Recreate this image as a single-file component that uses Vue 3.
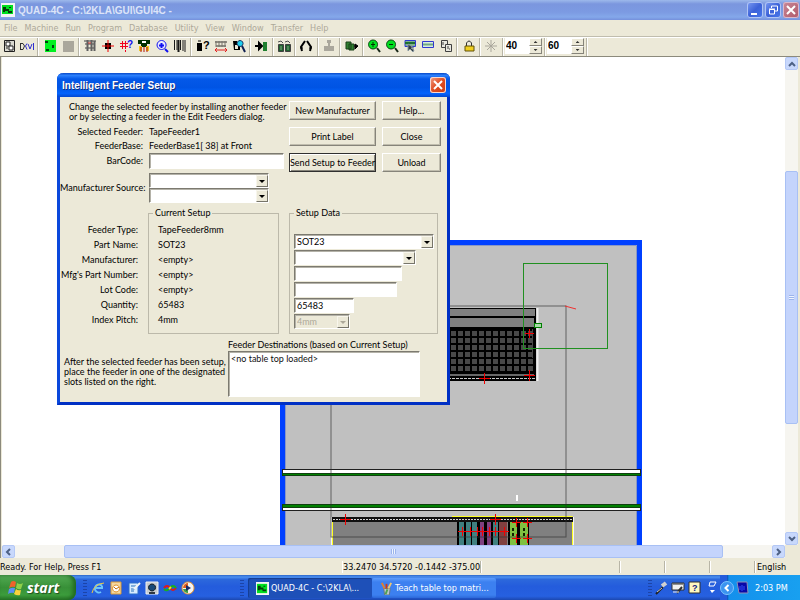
<template>
  <div class="desktop">
    <!-- main window title -->
    <header class="titlebar">
      <svg class="app-icon" width="14" height="14" viewBox="0 0 14 14">
        <path d="M0 0H14V14H0Z" fill="#f4f4f4" />
        <path d="M1 2H12V11H1Z" fill="#00e020" />
        <path d="M2 4H5V6H8V8H11V10H7V8H4V9H2ZM8 4H10V5H8Z" fill="#063c0a" />
      </svg>
      <h1>QUAD-4C - C:\2KLA\GUI\GUI4C -</h1>
      <div class="caption-buttons">
        <button class="caption" aria-label="Minimize">
          <svg width="16" height="16" viewBox="0 0 16 16"><path d="M4 11H10V13H4Z" fill="#fff" /></svg>
        </button>
        <button class="caption" aria-label="Restore">
          <svg width="16" height="16" viewBox="0 0 16 16" fill="none" stroke="#fff">
            <path d="M6.500 6V4H12.500V9H10" /><path d="M4.500 7.500H9.500V12H4.500ZM4 7H10" />
          </svg>
        </button>
        <button class="caption close-dim" aria-label="Close window">
          <svg width="16" height="16" viewBox="0 0 16 16"><path d="M4 4L12 12M12 4L4 12" stroke="#fff" stroke-width="2" /></svg>
        </button>
      </div>
    </header>

    <nav class="menubar">
      <button v-for="item in menu" :key="item">{{ item }}</button>
    </nav>

    <!-- toolbar -->
    <div class="toolbar">
      <div class="tools">
        <template v-for="(group, g) in tools" :key="g">
          <button v-for="tool in group" :key="tool.name" class="tool" :aria-label="tool.name">
            <svg width="16" height="16" viewBox="0 0 16 16">
              <path
                v-for="(p, i) in tool.paths"
                :key="i"
                :d="p[0]"
                :fill="p[1] || 'none'"
                :stroke="p[2] || 'none'"
                :stroke-width="p[3] || 1"
              />
              <text
                v-if="tool.mark"
                class="tool-mark"
                :x="tool.mark[1]"
                :y="tool.mark[2]"
                :fill="tool.mark[3]"
                :font-size="tool.mark[4]"
              >{{ tool.mark[0] }}</text>
            </svg>
          </button>
          <span class="separator"></span>
        </template>
      </div>
      <div v-for="s in speeds" :key="s.label" class="spinner">
        <input v-model="s.value" type="text" :aria-label="s.label" />
        <div class="spin-buttons">
          <button :aria-label="s.label + ' up'" @click="s.value++"><i class="tri up"></i></button>
          <button :aria-label="s.label + ' down'" @click="s.value--"><i class="tri down"></i></button>
        </div>
        <span class="separator"></span>
      </div>
    </div>

    <!-- machine view -->
    <main class="workarea">
      <div class="view">
        <svg class="machine" width="100%" height="100%">
          <g transform="translate(-2 -57)">
            <rect x="282.500" y="242.500" width="357" height="400" fill="#c0c0c0" stroke="#0040ff" stroke-width="5" />
            <path d="M285.500 560V245.500H636.500V560" fill="none" stroke="#8a98c4" />
            <!-- rear feeder bank -->
            <rect x="400" y="308" width="136" height="73" fill="#000" />
            <path d="M400 312.500H535" stroke="#808080" stroke-width="7" />
            <path d="M400 322.500H534" stroke="#808080" stroke-width="9" />
            <path d="M400 375H534" stroke="#686868" stroke-width="2" />
            <path d="M400 378.500H535" stroke="#c8c8c8" stroke-dasharray="3 1" />
            <path d="M537.500 308V381" stroke="#eee" stroke-width="2" />
            <template v-for="r in 6" :key="r">
              <rect v-for="c in 12" :key="c" :x="444 + c * 7" :y="324 + r * 7" width="5" height="5" fill="#484848" />
            </template>
            <path d="M532.500 329V358" stroke="#484848" />
            <!-- conveyor rails -->
            <rect x="282.500" y="469.500" width="358" height="6" fill="#fff" stroke="#202020" />
            <rect x="282.500" y="473.500" width="358" height="2" fill="#008000" stroke="#104010" />
            <rect x="282.500" y="504.500" width="358" height="6" fill="#fff" stroke="#202020" />
            <rect x="282.500" y="504.500" width="358" height="3" fill="#008000" stroke="#104010" />
            <rect x="516" y="495" width="2" height="6" fill="#fff" />
            <!-- front feeder bank -->
            <rect x="332" y="517" width="241" height="40" fill="#808080" />
            <path d="M331.500 517V557M573.500 517V557" stroke="#f4f4f4" />
            <path d="M332.500 521V557M452 516.500H572.500V557" fill="none" stroke="#ffff20" />
            <rect x="332" y="517" width="241" height="5" fill="#101010" />
            <path d="M333 519.500H572" stroke="#d8d8d8" stroke-dasharray="2 1" />
            <rect x="457" y="522" width="50" height="40" fill="#000" />
            <rect x="508" y="522" width="21" height="40" fill="#000" />
            <rect v-for="f in feeders" :key="f.x" :x="f.x" y="522" :width="f.w" height="40" :fill="f.color" />
            <path d="M512 528h2v3h-2zM512 533h2v3h-2zM523 528h2v3h-2zM523 533h2v3h-2z" fill="#102000" />
            <!-- work envelope -->
            <rect x="331" y="306" width="235" height="231" fill="none" stroke="#303030" stroke-opacity="0.650" />
            <rect x="523.500" y="263.500" width="84" height="85" fill="none" stroke="#209020" />
            <rect x="534.500" y="323.500" width="7" height="4" fill="#a8d8a8" stroke="#008000" />
            <path d="M565 306L576 309" stroke="#f03030" stroke-width="1" />
            <path v-for="(c, i) in crosses" :key="i" :d="crossPath(c)" stroke="#f00000" />
          </g>
        </svg>
        <div class="scrollbar vertical">
          <button aria-label="Scroll up"><svg width="8" height="8" viewBox="0 0 8 8"><path d="M1 6L4 3L7 6" /></svg></button>
          <span class="gap-before"></span>
          <span class="thumb"><i></i></span>
          <span class="gap-after"></span>
          <button aria-label="Scroll down"><svg width="8" height="8" viewBox="0 0 8 8"><path d="M1 2L4 5L7 2" /></svg></button>
        </div>
      </div>
      <div class="scrollbar horizontal">
        <button aria-label="Scroll left"><svg width="8" height="8" viewBox="0 0 8 8"><path d="M5 1L2 4L5 7" /></svg></button>
        <span class="gap-before"></span>
        <span class="thumb"><i></i></span>
        <span class="gap-after"></span>
        <button aria-label="Scroll right"><svg width="8" height="8" viewBox="0 0 8 8"><path d="M3 1L6 4L3 7" /></svg></button>
      </div>
    </main>

    <footer class="statusbar">
      <span class="pane ready">Ready. For Help, Press F1</span>
      <span class="pane wide">33.2470 34.5720 -0.1442 -375.00</span>
      <span class="pane wide"></span>
      <span class="pane"></span>
      <span class="pane"></span>
      <span class="pane"></span>
      <span class="pane">English</span>
    </footer>

    <!-- taskbar -->
    <div class="taskbar">
      <button class="start">
        <svg width="16" height="16" viewBox="0 0 16 16">
          <path d="M3 2Q5 0 8 2L7 7Q4 6 1 8Z" fill="#f0622c" />
          <path d="M9 3Q12 5 15 3L13 9Q11 10 8 8Z" fill="#8fd04a" />
          <path d="M1 9Q4 7 7 8L6 13Q3 12 0 14Z" fill="#5a90f4" />
          <path d="M8 9Q10 11 13 10L12 15Q9 16 6 14Z" fill="#fbd33c" />
        </svg>
        <span>start</span>
      </button>
      <div class="quick">
        <i class="grip"></i>
        <button v-for="q in quickLaunch" :key="q.name" :aria-label="q.name">
          <svg width="14" height="14" viewBox="0 0 14 14">
            <path
              v-for="(p, i) in q.paths"
              :key="i"
              :d="p[0]"
              :fill="p[1] || 'none'"
              :stroke="p[2] || 'none'"
              :stroke-width="p[3] || 1"
            />
          </svg>
        </button>
      </div>
      <i class="grip"></i>
      <div class="tasks">
        <button class="task active">
          <svg width="13" height="13" viewBox="0 0 14 14">
            <path d="M0 0H14V14H0Z" fill="#f4f4f4" />
            <path d="M1 2H12V12H1Z" fill="#00e020" />
            <path d="M2 4H5V6H8V8H11V10H7V8H4V9H2ZM8 4H10V5H8Z" fill="#063c0a" />
          </svg>
          <span>QUAD-4C - C:\2KLA\...</span>
        </button>
        <button class="task">
          <svg width="13" height="13" viewBox="0 0 14 14">
            <path d="M4 7H11L10 14H5Z" fill="#b8c4c8" stroke="#66767c" />
            <path d="M5 7L2 1" stroke="#e08030" stroke-width="2" />
            <path d="M7 7L7 2" stroke="#d03818" stroke-width="2" />
            <path d="M9 7L12 1" stroke="#f0c870" stroke-width="2" />
            <path d="M8 8L6 13" stroke="#50a050" stroke-width="2" />
          </svg>
          <span>Teach table top matri...</span>
        </button>
      </div>
      <div class="langbar">
        <i class="grip"></i>
        <button v-for="t in trayTools" :key="t.name" :aria-label="t.name">
          <svg width="14" height="14" viewBox="0 0 14 14">
            <path
              v-for="(p, i) in t.paths"
              :key="i"
              :d="p[0]"
              :fill="p[1] || 'none'"
              :stroke="p[2] || 'none'"
              :stroke-width="p[3] || 1"
            />
            <text v-if="t.mark" class="tool-mark" x="4" y="10" fill="#102080" font-size="9">?</text>
          </svg>
        </button>
      </div>
      <div class="tray">
        <button class="chevron" aria-label="Show hidden icons">
          <svg width="14" height="14" viewBox="0 0 14 14">
            <circle cx="7" cy="7" r="6.500" fill="#3a94f0" stroke="#7cc4fc" />
            <path d="M8.500 4L5.500 7L8.500 10" fill="none" stroke="#fff" stroke-width="2" />
          </svg>
        </button>
        <svg class="tray-icon" width="14" height="14" viewBox="0 0 14 14">
          <path d="M2 1H12L13 12H4Z" fill="#0808a8" stroke="#9090b8" />
          <path d="M5 5V9M7 4V10M9 5V9" stroke="#3050ff" />
        </svg>
        <time>2:03 PM</time>
      </div>
    </div>

    <!-- feeder dialog -->
    <section class="dialog" role="dialog" aria-labelledby="dlg-title">
      <div class="dialog-title">
        <h2 id="dlg-title">Intelligent Feeder Setup</h2>
        <button aria-label="Close dialog">
          <svg width="16" height="16" viewBox="0 0 16 16"><path d="M4 4L12 12M12 4L4 12" stroke="#fff" stroke-width="2" /></svg>
        </button>
      </div>
      <div class="dialog-body">
        <div class="top">
          <div class="feeder-info">
            <p class="intro">Change the selected feeder by installing another feeder<br />or by selecting a feeder in the Edit Feeders dialog.</p>
            <div class="row"><span>Selected Feeder:</span><span>TapeFeeder1</span></div>
            <div class="row"><span>FeederBase:</span><span>FeederBase1[ 38] at Front</span></div>
            <div class="row tall">
              <label for="barcode">BarCode:</label>
              <input id="barcode" v-model="barCode" type="text" />
            </div>
            <div class="row source">
              <label for="source">Manufacturer Source:</label>
              <div>
                <span class="combo w-source"><select id="source"><option></option></select></span>
                <span class="combo w-source"><select aria-label="Manufacturer Source detail"><option></option></select></span>
              </div>
            </div>
          </div>
          <div class="actions">
            <button
              v-for="a in actions"
              :key="a"
              :class="{ default: a === 'Send Setup to Feeder' }"
            >{{ a }}</button>
          </div>
        </div>

        <div class="setup">
          <div class="labels">
            <template v-for="f in fields" :key="f.label">
              <label v-if="f.id" :for="f.id">{{ f.label }}:</label>
              <span v-else>{{ f.label }}:</span>
            </template>
          </div>
          <fieldset class="current">
            <legend>Current Setup</legend>
            <p v-for="f in fields" :key="f.label">{{ f.current }}</p>
          </fieldset>
          <fieldset class="data">
            <legend>Setup Data</legend>
            <span class="combo w-part"><select id="part"><option>SOT23</option></select></span>
            <span class="combo w-maker"><select id="maker"><option></option></select></span>
            <input id="mfg" v-model="mfgPart" class="w-mfg" type="text" />
            <input id="lot" v-model="lotCode" class="w-lot" type="text" />
            <input id="qty" v-model="quantity" class="w-qty" type="text" />
            <span class="combo w-pitch disabled"><select id="pitch" disabled><option>4mm</option></select></span>
          </fieldset>
        </div>

        <div class="bottom">
          <p>After the selected feeder has been setup,<br />place the feeder in one of the designated<br />slots listed on the right.</p>
          <div class="destinations">
            <label for="dest">Feeder Destinations (based on Current Setup)</label>
            <select id="dest" size="4"><option>&lt;no table top loaded&gt;</option></select>
          </div>
        </div>
      </div>
    </section>
  </div>
</template>

<script setup>
import { ref } from "vue";

const menu = ["File", "Machine", "Run", "Program", "Database", "Utility", "View", "Window", "Transfer", "Help"];

const speeds = ref([
  { label: "Speed", value: 40 },
  { label: "Step", value: 60 },
]);

const barCode = ref("");
const mfgPart = ref("");
const lotCode = ref("");
const quantity = ref("65483");

const actions = ["New Manufacturer", "Help...", "Print Label", "Close", "Send Setup to Feeder", "Unload"];

const fields = [
  { label: "Feeder Type", current: "TapeFeeder8mm" },
  { label: "Part Name", current: "SOT23", id: "part" },
  { label: "Manufacturer", current: "<empty>", id: "maker" },
  { label: "Mfg's Part Number", current: "<empty>", id: "mfg" },
  { label: "Lot Code", current: "<empty>", id: "lot" },
  { label: "Quantity", current: "65483", id: "qty" },
  { label: "Index Pitch", current: "4mm", id: "pitch" },
];

const feeders = [
  { x: 459, w: 5, color: "#408080" },
  { x: 466, w: 5, color: "#408080" },
  { x: 472, w: 5, color: "#408080" },
  { x: 480, w: 4, color: "#804080" },
  { x: 487, w: 4, color: "#804080" },
  { x: 493, w: 5, color: "#408080" },
  { x: 499, w: 8, color: "#804040" },
  { x: 510, w: 7, color: "#80c040" },
  { x: 520, w: 8, color: "#80c040" },
];

// x, y, half size
const crosses = [
  [529, 333, 4], [529, 375, 5], [484, 378, 5], [345, 519, 5], [495, 519, 5],
  [462, 531, 4], [470, 531, 4], [477, 531, 4], [482, 531, 4], [489, 531, 4],
  [495, 531, 4], [504, 531, 4], [516, 522, 4], [527, 522, 4], [516, 538, 4], [527, 538, 4],
];
const crossPath = ([x, y, r]) => `M${x - r} ${y + 0.5}H${x + r + 1}M${x + 0.5} ${y - r}V${y + r + 1}`;

// every path is [d, fill, stroke, stroke width]
const tools = [
  [
    { name: "Open", paths: [["M3.500 2.500H13.500V13.500H3.500Z", "#d8d8d0", "#202020"], ["M5 4H9V8H5Z", "#fff", "#202020"], ["M8 8H12V12H8Z", "#fff", "#202020"], ["M5 10H7", "", "#202020"]] },
    { name: "Codes", paths: [["M1.500 5V12M2 5.500H4L5.500 8L4 11.500H2", "", "#303030"], ["M8 5.500L6.500 8L8 11.500M9 6L11 11L13 6M14.500 5V12", "", "#3030d0"]] },
  ],
  [
    { name: "Board", paths: [["M3 2H14V14H3Z", "#00f020"], ["M3 3H6V5H3ZM10 7H12V10H10ZM4 11H7V13H4Z", "#004010"]] },
    { name: "Blank", paths: [["M3 3H14V14H3Z", "#aaa79c"]] },
  ],
  [
    { name: "Feeders", paths: [["M2 3H14M3 6H13M3 10H13", "", "#404040"], ["M5.500 2V13M9.500 2V13M12.500 3V13", "", "#606060", 2], ["M6 5H9", "", "#d03030"]] },
    { name: "Target", paths: [["M5 5H11V11H5Z", "#000"], ["M8 2V14M2 8H14", "", "#f00000", 1]] },
    { name: "Locate", paths: [["M4.500 3V11M7.500 3V11M2 5.500H10M2 8.500H10M7.500 12V14", "", "#f00020"]], mark: ["?", 9, 10, "#1010f0", 10] },
    { name: "Head", paths: [["M2 2H14V6H11V9H5V6H2Z", "#003000"], ["M6 3H10V5H6Z", "#fff"], ["M3 8H6V13H3ZM10 8H13V13H10Z", "#f0c820"], ["M5 9V14M8 9V14M11 9V14", "", "#b01010"]] },
    { name: "Find", paths: [["M7.500 2.500A4.500 4.500 0 1 0 7.600 2.500", "#e8e8ff", "#1010f0", 1], ["M5 7.500H10M7.500 5V10", "", "#1010f0", 2], ["M11 11L14 14", "", "#1010f0", 2]] },
    { name: "Barcode", paths: [["M2.500 2V12M5 2V12M8.500 2V12M13 2V14M11 2V13", "", "#181818"], ["M6.500 2V14", "", "#181818", 2]] },
  ],
  [
    { name: "What", paths: [["M2 5H7V13H2Z", "#000"], ["M3 3H6", "", "#000"]], mark: ["?", 8, 11, "#000", 11] },
    { name: "Width", paths: [["M2 4H14M3 8H13", "", "#908c82", 2], ["M3 3V9M6 3V9M9 3V9M12 3V9", "", "#77746c"], ["M2 12H14M4 10L2 12L4 14M12 10L14 12L12 14", "", "#e02020"]] },
    { name: "Inspect", paths: [["M2 3H6V7H4V11H7V8H9V12H3Z", "#000"], ["M9 2.500A3 3 0 1 0 9.100 2.500", "#20d0f0", "#103060"], ["M11 8L14 14", "", "#102050", 2]] },
  ],
  [{ name: "Insert", paths: [["M2 8H8M6 5L9 8L6 11Z", "#000", "#000", 2], ["M10 4H14V13H10Z", "#208030"]] }],
  [{ name: "Pair", paths: [["M2.500 6.500H7.500V13.500H2.500ZM9.500 6.500H14.500V13.500H9.500Z", "#206030", "#404040"], ["M5 8V12M12 8V12", "", "#80b080"], ["M2 4L5 3L7 5M9 4L12 3L14 5", "", "#505050"]] }],
  [{ name: "Tools", paths: [["M7 3L3 9L4 13M9 3L13 9L12 13", "", "#000", 2], ["M2 10H5M11 10H14", "", "#000"]] }],
  [{ name: "Stamp", paths: [["M6 2H10V5H9V8H13V13H3V8H7V5H6Z", "#aaa79c"]] }],
  [{ name: "Run", paths: [["M2 4H7V11H2ZM5 6H10V12H5Z", "#308030", "#184018"], ["M10 8H12M11 6L14 8L11 11Z", "#000", "#000"]] }],
  [
    { name: "Zoom in", paths: [["M7 2A4.500 4.500 0 1 0 7.100 2", "#00e020", "#084010"], ["M5 6.500H9M7 4V9", "", "#003000"], ["M11 10L14 14", "", "#182818", 2]] },
    { name: "Zoom out", paths: [["M7 2A4.500 4.500 0 1 0 7.100 2", "#00e020", "#084010"], ["M5 6.500H9", "", "#003000"], ["M11 10L14 14", "", "#182818", 2]] },
    { name: "Select view", paths: [["M3 2.500H13.500V8.500H3Z", "#80b090", "#3038d0"], ["M3 5H13", "", "#207030", 2], ["M6 6V13L8 11L11 14L12 12L9 10H12Z", "#303840", "#8898a0"]] },
    { name: "Full view", paths: [["M2.500 3.500H13.500V9.500H2.500Z", "#d8ece0", "#3038d0"], ["M3 6.500H13", "", "#70a880", 2]] },
    { name: "Copy", paths: [["M3.500 2.500H9.500V9.500H3.500Z", "#e8e8e0", "#404040"], ["M7.500 6.500H13.500V13.500H7.500Z", "#e8e8e0", "#404040"], ["M5 4V7M10 8V11M11 11H12", "", "#404040"]] },
  ],
  [{ name: "Lock", paths: [["M5.500 8V5Q8 1 10.500 5V8", "", "#303030", 1], ["M4 8H13V13H4Z", "#f0d020", "#605008"]] }],
  [{ name: "Burst", paths: [["M8 2V14M2 8H14M4 4L12 12M12 4L4 12", "", "#aaa79c"]] }],
];

const quickLaunch = [
  { name: "Internet Explorer", paths: [["M11 5A4 4 0 1 0 10 11M4 7H11V5", "", "#6cc4fc", 2], ["M1 12Q3 3 13 2", "", "#f0c840"]] },
  { name: "Outlook", paths: [["M2 1H12V13H2Z", "#f4d8a0", "#d89838"], ["M7 4A3.500 3.500 0 1 0 7.100 4", "#fff", "#e08c20"], ["M5 6L7 8L10 6", "", "#c07010"]] },
  { name: "Show desktop", paths: [["M2 2H11V13H2Z", "#d8ecff", "#3070c8"], ["M4 5H9M4 8H8M4 10H7", "", "#2c70b8"], ["M7 8L13 2", "", "#f4f4f4", 2]] },
  { name: "Camera", paths: [["M1 1H13V13H1Z", "#c8ccd0", "#f0f0f0"], ["M7 3A3.500 3.500 0 1 0 7.100 3", "#184878", "#101820"], ["M4 12H10", "", "#303840", 2]] },
  { name: "Links", paths: [["M1 7Q4 3 7 7Q10 11 13 7", "", "#e01818", 2], ["M1 8Q4 11 7 7Q10 3 13 7", "", "#18b020", 2], ["M6 8L8 6", "", "#f0e020", 2]] },
  { name: "Media player", paths: [["M7 1A6 6 0 1 0 7.100 1", "#f4f4f4", "#e09030"], ["M7 2A5 5 0 0 0 2 7H7Z", "#e06020"], ["M2 8A5 5 0 0 0 7 12V8Z", "#40a040"], ["M5 4L10 7L5 10Z", "#182c68"]] },
];

const trayTools = [
  { name: "Microphone", paths: [["M2 13L9 6", "", "#202020", 2], ["M8 5L12 2", "", "#d0d0d0", 4], ["M3 11L8 7", "", "#c8c8c8"]] },
  { name: "Handwriting", paths: [["M1 2H13V9H1Z", "#f0f0f0", "#303030"], ["M2 3H12", "", "#303030"], ["M6 12L11 6", "", "#303030", 2], ["M2 11H8", "", "#f0f0f0"]] },
  { name: "Language help", paths: [["M1 1H12V12H1Z", "#fff8c0", "#303030"]], mark: true },
  { name: "Options", paths: [["M5 1H11L9 5H4Z", "", "#fff"], ["M5 9H10L7 12Z", "#fff"]] },
];
</script>

<style>
html,
body {
  margin: 0;
  overflow: hidden;
}
</style>

<style scoped>
.desktop {
  position: relative;
  display: flex;
  flex-direction: column;
  height: 100vh;
  overflow: hidden;
  background: #ece9d8;
  color: #000;
  font-family: "DejaVu Sans Condensed", "DejaVu Sans", sans-serif;
  font-size: 9px;
}

button,
input,
select {
  box-sizing: border-box;
  margin: 0;
  padding: 0;
  border: 0;
  border-radius: 0;
  background: none;
  color: inherit;
  font: inherit;
}

p,
h1,
h2 {
  margin: 0;
}

svg {
  display: block;
  flex: none;
}

/* title */
.titlebar {
  display: flex;
  align-items: center;
  height: 20px;
  padding: 0 1px;
  gap: 3px;
  background: linear-gradient(#9db9eb, #7b96de 20%, #7c9ae2 60%, #84a8ea 85%, #7590dc);
}

.titlebar h1 {
  flex: 1;
  color: #dce4f8;
  font: bold 10px "Liberation Sans", sans-serif;
}

.caption-buttons {
  display: flex;
  gap: 2px;
}

.caption {
  width: 16px;
  height: 16px;
  border-radius: 3px;
  background: linear-gradient(135deg, #7c9cf4, #3c62d8 50%, #4878ec);
  box-shadow: inset 0 0 0 1px #b0c4f4;
}

.caption.close-dim {
  background: linear-gradient(135deg, #c88898, #b05868);
  box-shadow: inset 0 0 0 1px #d8b8cc;
}

.menubar {
  display: flex;
  height: 16px;
  padding-left: 4px;
  gap: 7px;
  border-bottom: 1px solid #c0bdae;
  color: #aca899;
}

/* toolbar */
.toolbar {
  display: flex;
  height: 18px;
  border-top: 1px solid #fff;
  border-bottom: 1px solid #8c8a7c;
}

.tools {
  display: flex;
  width: 505px;
}

.tool {
  display: flex;
  align-items: center;
  justify-content: center;
  flex: none;
  width: 18px;
  height: 16px;
}

.tool-mark {
  font-family: "Liberation Sans", sans-serif;
  font-weight: bold;
}

.separator {
  display: flex;
  flex: 1;
  justify-content: center;
}

.separator::after {
  content: "";
  width: 1px;
  background: #b8b5a6;
  border-right: 1px solid #fff;
}

.spinner {
  display: flex;
  width: 42px;
}

.spinner input {
  width: 24px;
  height: 16px;
  padding: 0 1px 2px;
  background: #fff;
  font: bold 10px/12px "Liberation Sans", sans-serif;
}

.spin-buttons {
  width: 13px;
}

.spin-buttons button {
  display: flex;
  align-items: center;
  justify-content: center;
  width: 13px;
  height: 8px;
  background: #ece9d8;
  border: 1px solid;
  border-color: #fff #86847a #86847a #fff;
}

.tri {
  width: 4px;
  height: 2px;
  background: #303030;
}

.tri.up {
  clip-path: polygon(50% 0, 100% 100%, 0 100%);
}

.tri.down {
  clip-path: polygon(0 0, 100% 0, 50% 100%);
}

/* work area */
.workarea {
  display: flex;
  flex-direction: column;
  flex: 1;
  min-height: 0;
  padding-left: 1px;
  margin-right: 2px;
  border-left: 1px solid #8c8a7c;
}

.view {
  display: flex;
  flex: 1;
  min-height: 0;
}

.machine {
  flex: 1;
  min-width: 0;
  background: #fff;
}

.scrollbar {
  display: flex;
  flex: none;
  background: #f6f5f0;
}

.scrollbar.vertical {
  flex-direction: column;
  width: 13px;
}

.scrollbar.horizontal {
  height: 13px;
  margin-right: 13px;
}

.scrollbar button {
  display: flex;
  align-items: center;
  justify-content: center;
  width: 13px;
  height: 13px;
  border: 1px solid #b4c8f6;
  border-radius: 2px;
  background: #c8d8fc;
}

.scrollbar button path {
  fill: none;
  stroke: #4d6185;
  stroke-width: 2;
}

.thumb {
  display: flex;
  align-items: center;
  justify-content: center;
  border: 1px solid #a8c0f4;
  border-radius: 2px;
  background: #c4d4fc;
}

.vertical .gap-before {
  flex: 101;
}

.vertical .thumb {
  flex: 253;
}

.vertical .gap-after {
  flex: 108;
}

.horizontal .gap-before,
.horizontal .gap-after {
  flex: 49;
}

.horizontal .thumb {
  flex: 661;
}

.thumb i {
  width: 5px;
  height: 5px;
}

.vertical .thumb i {
  background: repeating-linear-gradient(#9cb4ec 0 1px, #eef4fe 1px 2px);
}

.horizontal .thumb i {
  background: repeating-linear-gradient(90deg, #9cb4ec 0 1px, #eef4fe 1px 2px);
}

/* status */
.statusbar {
  display: flex;
  height: 17px;
  padding-top: 1px;
  box-sizing: border-box;
}

.pane {
  box-sizing: border-box;
  width: 45px;
  margin: 2px 0;
  padding-left: 1px;
  border-right: 1px solid #b8b5a6;
  box-shadow: 1px 0 #fff;
  line-height: 12px;
  white-space: nowrap;
}

.pane.wide {
  width: 139px;
}

.pane.ready {
  flex: 1;
  border-right: 0;
  padding-left: 0;
}

.pane:last-child {
  border-right: 0;
  padding-left: 2px;
}

/* taskbar */
.taskbar {
  display: flex;
  align-items: stretch;
  height: 25px;
  background: linear-gradient(#2c66c8, #4c90f0 8%, #2c68dc 18%, #245cdc 45%, #2660e0 85%, #1c48b0);
  color: #fff;
}

.start {
  display: flex;
  align-items: center;
  width: 76px;
  padding-left: 8px;
  gap: 3px;
  border-radius: 0 8px 8px 0;
  background: linear-gradient(#5cac5c, #48a048 20%, #389038 50%, #3c9c3c 80%, #287828);
  box-shadow: inset -3px 0 4px #206820;
  font: italic bold 14px "Open Sans", sans-serif;
  text-shadow: 1px 1px 1px #205020;
}

.grip {
  align-self: center;
  width: 4px;
  height: 16px;
  background: repeating-linear-gradient(#1c44a8 0 1px, transparent 1px 3px);
}

.quick {
  display: flex;
  align-items: center;
  width: 157px;
  padding-left: 7px;
}

.quick button {
  width: 18px;
  padding-left: 2px;
}

.quick .grip {
  margin-right: 2px;
}

.tasks {
  display: flex;
  flex: 1;
  min-width: 0;
  padding: 3px 0 2px 4px;
}

.task {
  display: flex;
  align-items: center;
  flex: 0 1 124px;
  min-width: 0;
  padding-left: 8px;
  gap: 2px;
  border-radius: 2px;
  background: linear-gradient(#5c9cfc, #3c80f0 20%, #3c80f0 85%, #2c68d8);
  white-space: nowrap;
}

.task.active {
  background: #1e50b8;
  box-shadow: inset 1px 1px 1px #143c90;
}

.langbar {
  display: flex;
  align-items: center;
}

.langbar button {
  width: 17px;
  padding-left: 2px;
}

.tray {
  display: flex;
  align-items: center;
  width: 80px;
  background: linear-gradient(90deg, #245cdc 7px, #0c4cb0 7px, #1490ec 9px, #18a0f0);
}

.tray-icon {
  margin-left: 1px;
}

.tray time {
  margin-left: 6px;
  white-space: nowrap;
}

/* dialog */
.dialog {
  position: absolute;
  left: 57px;
  top: 73px;
  width: 393px;
  box-sizing: border-box;
  border: 3px solid;
  border-color: #0a48dc #0030c4 #0030c4 #0a48dc;
  border-top: 0;
  border-radius: 6px 6px 0 0;
  background: #ece9d8;
  font: 9px/10px Lato, "Liberation Sans", sans-serif;
}

.dialog-title {
  display: flex;
  align-items: center;
  justify-content: space-between;
  height: 24px;
  margin: 0 -3px;
  padding: 0 4px 0 5px;
  box-sizing: border-box;
  border-radius: 6px 6px 0 0;
  background: linear-gradient(#0848c8, #2c80fc 10%, #0458e8 25%, #0054e4 60%, #0464fc 85%, #0448d0);
}

.dialog-title h2 {
  color: #fff;
  font: bold 10px "Liberation Sans", sans-serif;
  text-shadow: 1px 1px #103080;
}

.dialog-title button {
  width: 16px;
  height: 16px;
  border-radius: 3px;
  background: linear-gradient(135deg, #f0a088, #e04c20 50%, #c83c14);
  box-shadow: inset 0 0 0 1px #f8d8d0;
}

.dialog-body {
  padding-bottom: 5px;
}

.top {
  display: flex;
  height: 110px;
}

.feeder-info {
  width: 229px;
}

.intro {
  height: 23px;
  padding: 5px 0 0 9px;
  white-space: nowrap;
}

.row {
  display: grid;
  grid-template-columns: 83px 135px;
  column-gap: 6px;
  align-items: center;
  height: 14px;
  white-space: nowrap;
}

.row > :first-child,
.labels {
  text-align: right;
}

.row.tall {
  height: 16px;
}

.row.source {
  height: 30px;
  margin-top: 4px;
}

.dialog input,
.combo select,
.destinations select {
  border: 1px solid;
  border-color: #7c7a70 #fff #fff #7c7a70;
  background: #fff;
  box-shadow: inset 1px 1px #b4b2a8;
}

.dialog input {
  height: 16px;
  padding: 0 2px;
}

.combo {
  position: relative;
  display: block;
  height: 15px;
}

.combo select {
  display: block;
  width: 100%;
  height: 15px;
  padding: 0 2px;
  appearance: none;
}

.combo::before {
  content: "";
  position: absolute;
  top: 2px;
  right: 1px;
  width: 12px;
  height: 12px;
  box-sizing: border-box;
  border: 1px solid;
  border-color: #f8f6ec #77756a #77756a #f8f6ec;
  background: #ece9d8;
  pointer-events: none;
}

.combo::after {
  content: "";
  position: absolute;
  top: 7px;
  right: 4px;
  width: 6px;
  height: 3px;
  background: #000;
  clip-path: polygon(0 0, 100% 0, 50% 100%);
  pointer-events: none;
}

.combo.disabled select {
  background: #ece9d8;
  color: #aca899;
  opacity: 1;
}

.combo.disabled::after {
  background: #aca899;
}

.w-source {
  width: 120px;
}

.w-part {
  width: 140px;
}

.w-maker {
  width: 122px;
}

.w-mfg {
  width: 108px;
}

.w-lot {
  width: 103px;
}

.w-qty {
  width: 60px;
}

.w-pitch {
  width: 56px;
}

.actions {
  display: grid;
  grid-template-columns: 87px 59px;
  grid-auto-rows: 19px;
  gap: 7px 6px;
  padding-top: 4px;
}

.actions button {
  border: 1px solid;
  border-color: #fff #86847a #86847a #fff;
  box-shadow: inset -1px -1px #c0bdae;
  white-space: nowrap;
}

.actions button.default {
  border-color: #303030;
  box-shadow: inset 1px 1px #fff, inset -1px -1px #86847a;
}

.setup {
  display: flex;
  height: 127px;
}

.labels {
  display: grid;
  grid-auto-rows: 15px;
  align-content: start;
  width: 78px;
  padding-top: 15px;
  line-height: 15px;
  white-space: nowrap;
}

fieldset {
  box-sizing: border-box;
  min-width: 0;
  margin: 0;
  border: 1px solid #bcb9aa;
}

legend {
  height: 12px;
  padding: 0 2px;
  line-height: 12px;
}

.current {
  width: 131px;
  margin-left: 10px;
  padding: 3px 0 0 9px;
  line-height: 15px;
}

.current legend {
  margin-left: -5px;
}

.data {
  display: flex;
  flex-direction: column;
  gap: 1px;
  width: 149px;
  margin-left: 10px;
  padding: 15px 0 0 4px;
}

.data input {
  height: 15px;
}

.bottom {
  display: grid;
  grid-template-columns: 164px 192px;
  padding: 6px 0 0 4px;
}

.bottom p {
  padding-top: 17px;
  white-space: nowrap;
}

.destinations label {
  display: block;
  height: 11px;
  white-space: nowrap;
}

.destinations select {
  display: block;
  width: 192px;
  height: 46px;
  padding: 1px;
  overflow: hidden;
}

.destinations option {
  min-height: 10px;
  padding: 0 1px;
  line-height: 10px;
}

.destinations option:checked {
  background: #fff linear-gradient(#fff, #fff);
}
</style>
